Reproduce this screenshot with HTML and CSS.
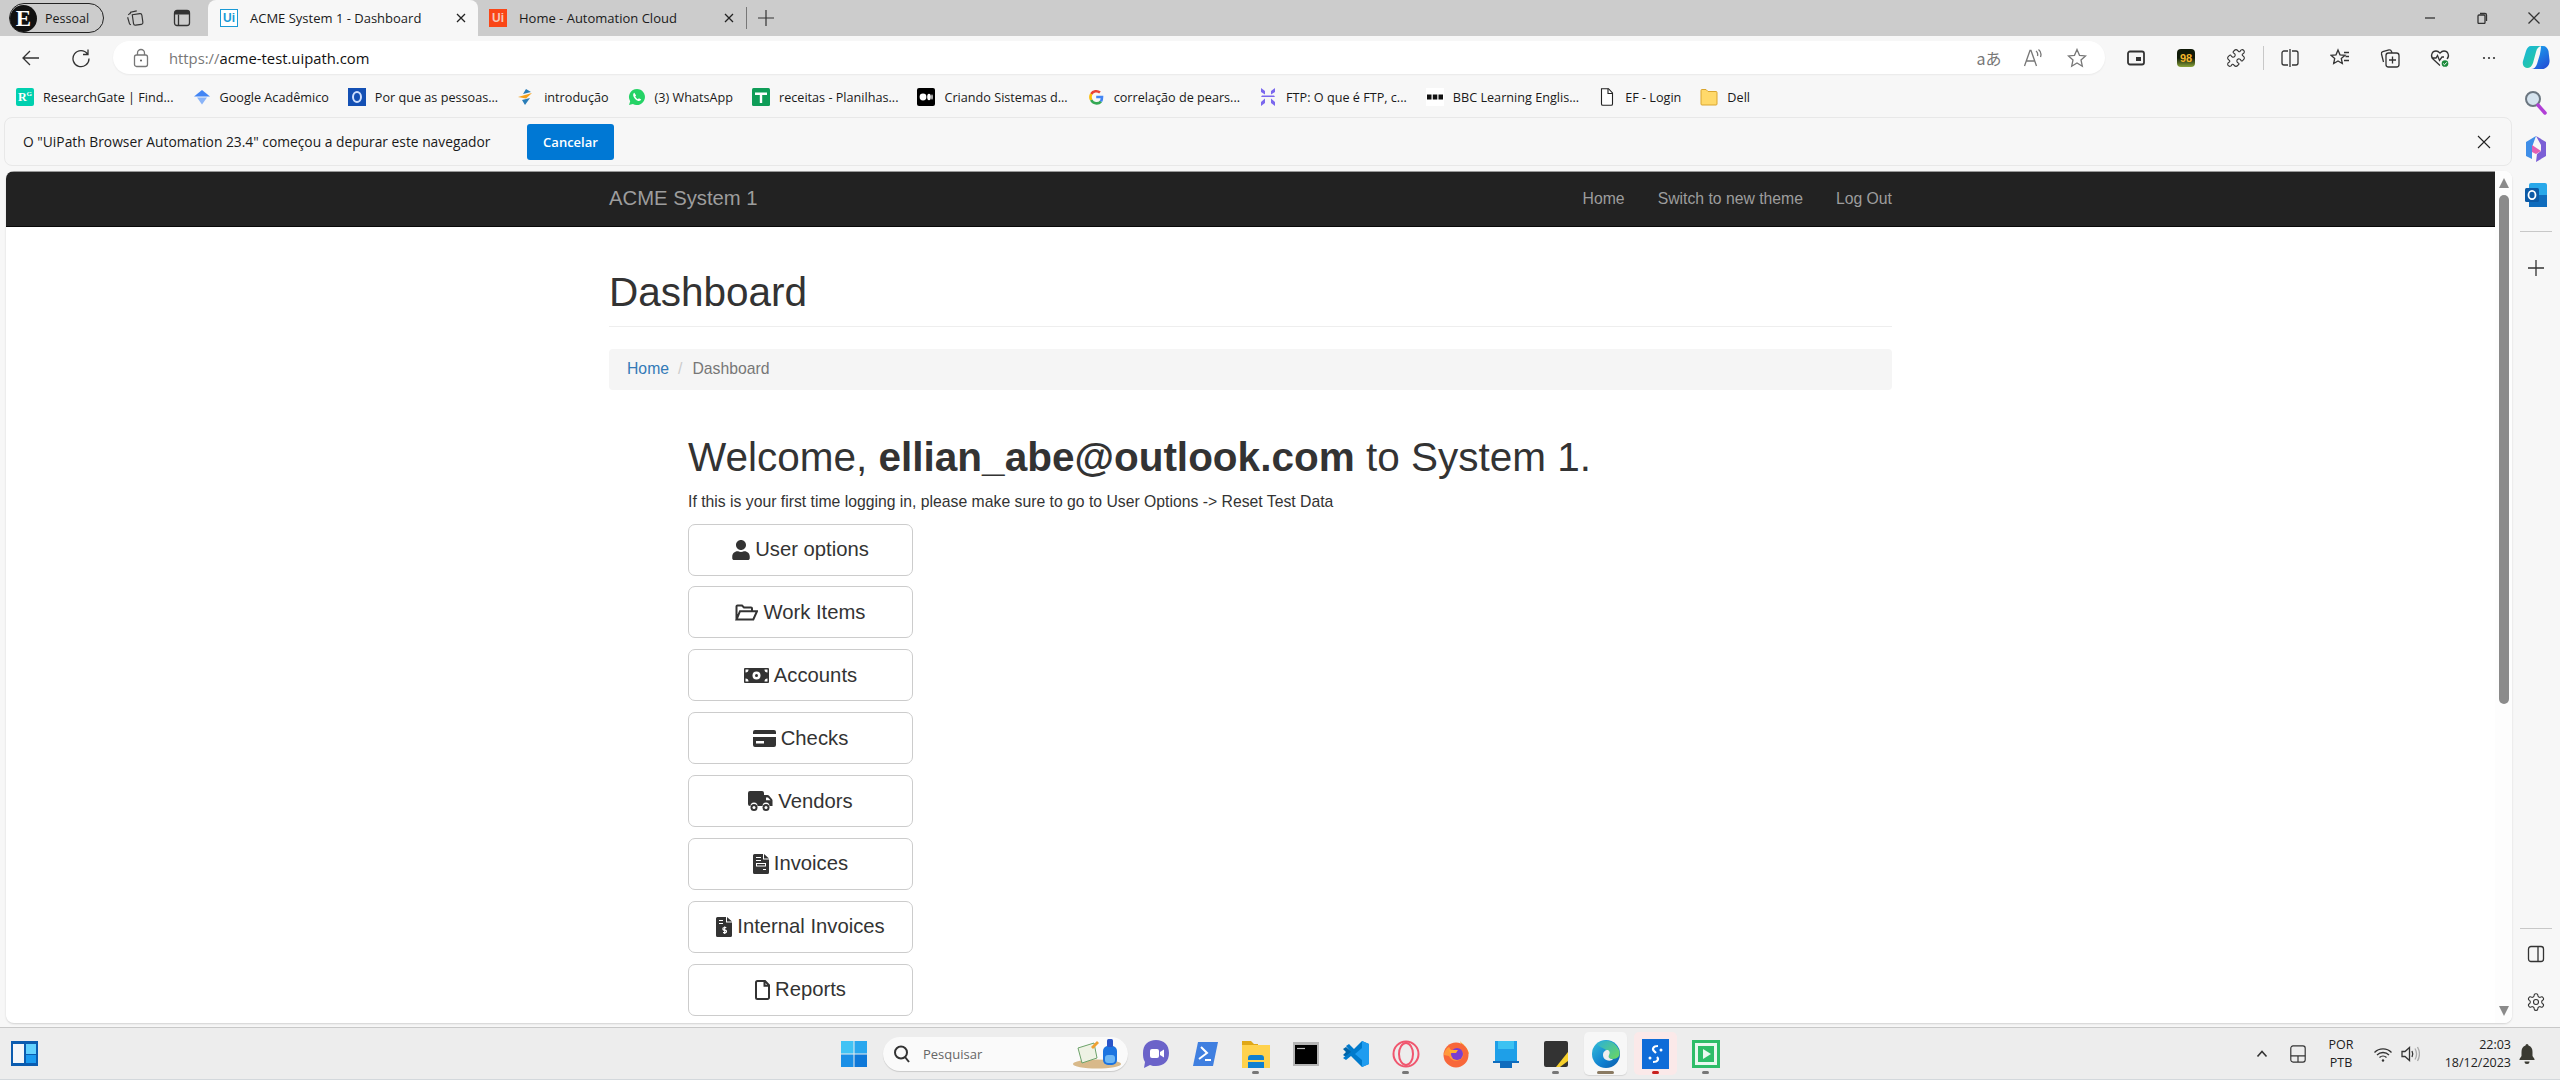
FILE: index.html
```html
<!DOCTYPE html>
<html lang="pt-BR">
<head>
    <meta charset="UTF-8">
    <title>ACME System 1 - Dashboard</title>
    <link rel="stylesheet" href="styles.css">
</head>
<body>
<div class="tabstrip">
    <div class="profile"><span class="avatar">E</span><span class="profile-name">Pessoal</span></div>
    <div class="strip-icon first"><svg class="ic18" viewBox="0 0 20 20"><path d="M3 5.5 7 3M2 8l1 7c.2 1 .8 1.5 1.500 1.800M5 5l1-2 7-.5M7.500 6h8.500a2 2 0 0 1 2 2v8a2 2 0 0 1-2 2H9.500a2 2 0 0 1-2-2z" transform="rotate(-8 10 10)"/></svg></div>
    <div class="strip-icon"><svg class="ic18" viewBox="0 0 18 18"><rect x="1.500" y="1.500" width="15" height="15" rx="2.500"/><path class="solid" d="M1.500 4a2.500 2.500 0 0 1 2.500-2.500h10A2.500 2.500 0 0 1 16.500 4v1.500h-15z"/><path d="M5.500 5.500v11"/></svg></div>
    <div class="tab active">
        <span class="uifav blue">Ui</span>
        <span class="tab-title">ACME System 1 - Dashboard</span>
        <svg class="tab-x" viewBox="0 0 12 12"><path d="M2 2l8 8M10 2l-8 8"/></svg>
    </div>
    <div class="tab other">
        <span class="uifav orange">Ui</span>
        <span class="tab-title">Home - Automation Cloud</span>
        <svg class="tab-x" viewBox="0 0 12 12"><path d="M2 2l8 8M10 2l-8 8"/></svg>
    </div>
    <div class="tab-divider"></div>
    <svg class="tab-plus" viewBox="0 0 18 18"><path d="M9 1v16M1 9h16"/></svg>
    <div class="win-controls">
        <div class="win-btn"><svg class="ic12" viewBox="0 0 12 12"><path d="M1 6h10"/></svg></div>
        <div class="win-btn"><svg class="ic12" viewBox="0 0 12 12"><rect x="2" y="3" width="7" height="8.500" rx="1"/><path d="M4 1.500h5a1.500 1.500 0 0 1 1.500 1.500v6"/></svg></div>
        <div class="win-btn"><svg class="ic12" viewBox="0 0 12 12"><path d="M.5.500l11 11M11.500.500l-11 11"/></svg></div>
    </div>
</div>

<div class="workarea">
    <div class="browser-col">
        <div class="toolbar">
            <div class="tool"><svg class="ic20" viewBox="0 0 20 20"><path d="M18 10H2M9 3l-7 7 7 7"/></svg></div>
            <div class="tool"><svg class="ic20" viewBox="0 0 20 20"><path d="M16.500 6A8 8 0 1 0 18 10.500M17 1.500V6.500h-5"/></svg></div>
            <div class="urlbar">
                <svg class="lock" viewBox="0 0 16 20"><rect x="1.500" y="7" width="13" height="11.500" rx="2"/><path d="M4.500 7V5a3.500 3.500 0 0 1 7 0v2"/><circle class="dot" cx="8" cy="12.500" r="1"/></svg>
                <span class="url"><span class="url-scheme">https://</span>acme-test.uipath.com</span>
                <div class="url-actions">
                    <span class="translate">aあ</span>
                    <div class="url-act"><svg class="ic20 grey" viewBox="0 0 20 20"><path d="M1.500 18 7 2.500h1L13.500 18M3.500 13h8M13 3c1.500 1 2 3 1.500 5M15.500 1.500c2 1.500 3 4.500 2 7.500"/></svg></div>
                    <div class="url-act"><svg class="ic20 grey" viewBox="0 0 20 20"><path d="M10 1.500l2.500 5.800 6 .6-4.500 4.100 1.300 6.200L10 15l-5.300 3.200L6 12 1.500 7.900l6-.6z"/></svg></div>
                </div>
            </div>
            <div class="tool-group">
                <div class="tool"><svg class="ic18" viewBox="0 0 18 18"><rect x="1" y="2.500" width="16" height="13" rx="2" stroke-width="1.800"/><rect class="solid" x="9" y="8" width="5" height="4"/></svg></div>
                <div class="tool"><span class="ext98">98</span></div>
                <div class="tool"><svg class="ic20" viewBox="0 0 24 24"><path d="M19.439 7.850c-.049.322.059.648.289.878l1.568 1.568c.47.47.706 1.087.706 1.704s-.235 1.233-.706 1.704l-1.611 1.611a.98.98 0 0 1-.837.276c-.47-.07-.802-.48-.968-.925a2.501 2.501 0 1 0-3.214 3.214c.446.166.855.497.925.968a.979.979 0 0 1-.276.837l-1.61 1.61a2.404 2.404 0 0 1-1.705.707 2.402 2.402 0 0 1-1.704-.706l-1.568-1.568a1.026 1.026 0 0 0-.877-.29c-.493.074-.84.504-1.02.968a2.500 2.500 0 1 1-3.237-3.237c.464-.18.894-.527.967-1.02a1.026 1.026 0 0 0-.289-.877l-1.568-1.568A2.402 2.402 0 0 1 1.998 12c0-.617.236-1.234.706-1.704L4.230 8.770c.24-.24.581-.353.917-.303.515.077.877.528 1.073 1.010a2.500 2.500 0 1 0 3.259-3.259c-.482-.196-.933-.558-1.010-1.073-.05-.336.062-.676.303-.917l1.525-1.525A2.402 2.402 0 0 1 12 1.998c.617 0 1.234.236 1.704.706l1.568 1.568c.23.23.556.338.877.29.493-.074.84-.504 1.020-.968a2.500 2.500 0 1 1 3.237 3.237c-.464.18-.894.527-.967 1.020Z"/></svg></div>
                <div class="tool-sep"></div>
                <div class="tool"><svg class="ic20" viewBox="0 0 20 20"><path d="M8 3H4a2 2 0 0 0-2 2v10a2 2 0 0 0 2 2h4M12 3h4a2 2 0 0 1 2 2v10a2 2 0 0 1-2 2h-4M10 1v18"/></svg></div>
                <div class="tool"><svg class="ic20" viewBox="0 0 20 20"><path d="M8 2l2 4.800 5 .5-3.700 3.200 1 5L8 13l-4.300 2.500 1-5L1 7.300l5-.5zM14 4.500h5M15.500 8.500H19M14 12.500h5"/></svg></div>
                <div class="tool"><svg class="ic20" viewBox="0 0 20 20"><rect x="6" y="5" width="13" height="14" rx="2.500"/><path d="M12.500 8.500v7M9 12h7M3.500 14 1.500 6c-.2-1 .3-2 1.300-2.300L9 2c1-.3 2 .2 2.500 1.500L12 5"/></svg></div>
                <div class="tool"><svg class="ic20" viewBox="0 0 20 20"><path d="M10 17.500 3 11c-3-3-1-8 3-8 2 0 3 1 4 2.200C11 4 12 3 14 3c4 0 6 5 3 8M1.500 10H6l1.500-2.500 2 5L12 9h2"/><circle class="ok" cx="15" cy="15.500" r="4"/><path class="ok-check" d="M13.200 15.500l1.300 1.300 2.300-2.500"/></svg></div>
                <div class="tool last"><svg class="ic16" viewBox="0 0 16 16"><circle class="solid" cx="3" cy="8" r="1.100"/><circle class="solid" cx="8" cy="8" r="1.100"/><circle class="solid" cx="13" cy="8" r="1.100"/></svg></div>
            </div>
        </div>

        <div class="bookmarks">
            <div class="bm"><span class="bm-ico rg">R<sup>G</sup></span><span class="bm-t">ResearchGate | Find...</span></div>
            <div class="bm"><svg class="bm-svg" viewBox="0 0 18 18"><path fill="#4285f4" d="M9 2 1 8.500h16z"/><path fill="#8ab4f8" d="M4 9.500h10L9 16.500z"/></svg><span class="bm-t">Google Acadêmico</span></div>
            <div class="bm"><span class="bm-ico oring"><span class="oring-in"></span></span><span class="bm-t">Por que as pessoas...</span></div>
            <div class="bm"><svg class="bm-svg" viewBox="0 0 18 18"><path fill="#f5a11c" d="M1 9 15 5 9 10.500z"/><path fill="#2a7db8" d="M9 1l5 3-8 2zM5 12l8-2-5 7z"/></svg><span class="bm-t">introdução</span></div>
            <div class="bm"><svg class="bm-svg" viewBox="0 0 18 18"><path fill="#25d366" d="M9 1a8 8 0 0 0-6.800 12.200L1 17l3.900-1.100A8 8 0 1 0 9 1z"/><path fill="#fff" d="M6.300 4.800c-1 .6-1.500 2-.8 3.600 1 2.300 2.500 3.800 4.700 4.500 1.400.4 2.600-.3 3-1.300l-2.300-1.300-1 1c-1.300-.6-2.100-1.500-2.700-2.700l.9-1z"/></svg><span class="bm-t">(3) WhatsApp</span></div>
            <div class="bm"><svg class="bm-svg" viewBox="0 0 18 18"><rect width="18" height="18" rx="1.500" fill="#0f9d58"/><path fill="#fff" d="M3 4.500h12V7h-4.800v8H7.800V7H3z"/></svg><span class="bm-t">receitas - Planilhas...</span></div>
            <div class="bm"><svg class="bm-svg" viewBox="0 0 18 18"><rect width="18" height="18" rx="2" fill="#000"/><circle cx="6" cy="9" r="3.400" fill="#fff"/><ellipse cx="12" cy="9" rx="1.800" ry="3.200" fill="#fff"/><ellipse cx="15" cy="9" rx=".7" ry="2.800" fill="#fff"/></svg><span class="bm-t">Criando Sistemas d...</span></div>
            <div class="bm"><svg class="bm-svg" viewBox="0 0 18 18"><path fill="none" stroke-width="2.600" stroke="#ea4335" d="M4.200 6A6 6 0 0 1 13 4.500"/><path fill="none" stroke-width="2.600" stroke="#fbbc05" d="M4.200 6a6.500 6.500 0 0 0 0 6"/><path fill="none" stroke-width="2.600" stroke="#34a853" d="M4.200 12a6 6 0 0 0 9.800 1.500"/><path fill="none" stroke-width="2.600" stroke="#4285f4" d="M9.200 9H15c0 2-.4 3.300-1 4.500"/></svg><span class="bm-t">correlação de pears...</span></div>
            <div class="bm"><svg class="bm-svg" viewBox="0 0 18 18"><path fill="#7b68ee" d="M2 0l4 3v3.500L2 4zM16 0l-4 3v3.500L16 4zM3 7.500h12L16 9H2zM2 14l4-3.500V15l-4 3zM16 14l-4-3.500V15l4 3z"/></svg><span class="bm-t">FTP: O que é FTP, c...</span></div>
            <div class="bm"><svg class="bm-svg" viewBox="0 0 18 18"><rect width="18" height="18" fill="#fff"/><path fill="#111" d="M1 6.500h4.500v5H1zM6.800 6.500h4.500v5H6.800zM12.500 6.500H17v5h-4.500z"/></svg><span class="bm-t">BBC Learning Englis...</span></div>
            <div class="bm"><svg class="bm-svg" viewBox="0 0 18 18"><path fill="#fff" stroke="#222" stroke-width="1.100" d="M3.500.700h7L14.500 5v11a1.300 1.300 0 0 1-1.300 1.300H4.800A1.300 1.300 0 0 1 3.500 16z"/><path fill="none" stroke="#222" stroke-width="1.100" d="M10 .7V5.500h4.500"/></svg><span class="bm-t">EF - Login</span></div>
            <div class="bm"><svg class="bm-svg" viewBox="0 0 18 18"><path fill="#ffd96a" stroke="#d9a52e" d="M1 2.500a1 1 0 0 1 1-1h4l2 2h8a1 1 0 0 1 1 1V16a1 1 0 0 1-1 1H2a1 1 0 0 1-1-1z"/></svg><span class="bm-t">Dell</span></div>
        </div>

        <div class="debugbar">
            <span class="debug-text">O "UiPath Browser Automation 23.4" começou a depurar este navegador</span>
            <button class="debug-btn">Cancelar</button>
            <svg class="debug-x" viewBox="0 0 14 14"><path d="M1 1l12 12M13 1 1 13"/></svg>
        </div>

        <div class="page">
            <div class="page-body">
                <nav class="navbar">
                    <div class="nav-inner">
                        <a class="brand">ACME System 1</a>
                        <div class="nav-links"><a>Home</a><a>Switch to new theme</a><a>Log Out</a></div>
                    </div>
                </nav>
                <div class="container">
                    <h1 class="page-title">Dashboard</h1>
                    <div class="breadcrumb"><a>Home</a><span class="crumb-sep">/</span><span class="crumb-now">Dashboard</span></div>
                    <div class="dash">
                        <h1 class="welcome">Welcome, <strong>ellian_abe@outlook.com</strong> to System 1.</h1>
                        <p class="hint">If this is your first time logging in, please make sure to go to User Options -&gt; Reset Test Data</p>
                        <div class="menu">
                            <a class="menu-btn"><svg class="bi" width="18" height="20" viewBox="0 0 448 512"><path d="M224 256c70.700 0 128-57.300 128-128S294.700 0 224 0 96 57.300 96 128s57.300 128 128 128zm89.600 32h-16.700c-22.200 10.200-46.900 16-72.900 16s-50.600-5.800-72.900-16h-16.700C60.200 288 0 348.200 0 422.400V464c0 26.500 21.500 48 48 48h352c26.500 0 48-21.500 48-48v-41.600c0-74.200-60.200-134.400-134.400-134.400z"/></svg>User options</a>
                            <a class="menu-btn"><svg class="bi" width="23" height="17" viewBox="0 0 23 17"><path class="bi-line" d="M1.500 15.500V2.500a1 1 0 0 1 1-1h4.500l2 2h7a1 1 0 0 1 1 1V7M1.500 15.500l3.500-8.300h17l-3.700 8.300z"/></svg>Work Items</a>
                            <a class="menu-btn"><svg class="bi" width="25" height="15" viewBox="0 0 25 15"><rect width="25" height="15" rx="1"/><circle class="bi-w" cx="12.500" cy="7.500" r="4"/><circle cx="12.500" cy="7.500" r="1.500"/><path class="bi-w" d="M1.500 1.500h3a3 3 0 0 1-3 3zM23.500 1.500h-3a3 3 0 0 0 3 3zM1.500 13.500h3a3 3 0 0 0-3-3zM23.500 13.500h-3a3 3 0 0 1 3-3z"/></svg>Accounts</a>
                            <a class="menu-btn"><svg class="bi" width="23" height="17" viewBox="0 0 23 17"><path d="M0 2a2 2 0 0 1 2-2h19a2 2 0 0 1 2 2v2H0zM0 7h23v8a2 2 0 0 1-2 2H2a2 2 0 0 1-2-2z"/><rect class="bi-w" x="3" y="11" width="8" height="2.500"/></svg>Checks</a>
                            <a class="menu-btn"><svg class="bi" width="25" height="20" viewBox="0 0 25 20"><path d="M2 0h12a2 2 0 0 1 2 2v2h3.500c.5 0 1 .2 1.400.6l3 3.300c.4.400.6.900.6 1.400V15h-3a3.500 3.500 0 0 0-7 0H9.500a3.500 3.500 0 0 0-7 0H2a2 2 0 0 1-2-2V2a2 2 0 0 1 2-2z"/><path class="bi-w" d="M18 6.500h2l2.500 2.800H18z"/><circle cx="6" cy="16.500" r="3.500"/><circle class="bi-w" cx="6" cy="16.500" r="1.500"/><circle cx="18" cy="16.500" r="3.500"/><circle class="bi-w" cx="18" cy="16.500" r="1.500"/></svg>Vendors</a>
                            <a class="menu-btn"><svg class="bi" width="16" height="20" viewBox="0 0 16 20"><path d="M1.500 0H10v5.500h6V18.500A1.500 1.500 0 0 1 14.500 20h-13A1.500 1.500 0 0 1 0 18.500v-17A1.500 1.500 0 0 1 1.500 0zM11 0l5 4.500h-5z"/><path class="bi-w" d="M3 3h5v1H3zM3 6h5v1H3zM3 9h10v3.500H3zM10 15h3v1h-3z"/><rect x="4" y="10" width="8" height="1.500"/></svg>Invoices</a>
                            <a class="menu-btn"><svg class="bi" width="16" height="20" viewBox="0 0 16 20"><path d="M1.500 0H10v5.500h6V18.500A1.500 1.500 0 0 1 14.500 20h-13A1.500 1.500 0 0 1 0 18.500v-17A1.500 1.500 0 0 1 1.500 0zM11 0l5 4.500h-5z"/><path class="bi-w" d="M3 3h4v1H3zM3 6h4v1H3z"/><path class="bi-s" d="M10.300 10.500H8.200a1.100 1.100 0 0 0 0 2.600h1a1.100 1.100 0 0 1 0 2.600H7M8.700 9.500v7.500"/></svg>Internal Invoices</a>
                            <a class="menu-btn"><svg class="bi" width="15" height="20" viewBox="0 0 15 20"><path class="bi-line" d="M2.500 1h7.500l4 4.200v12.300a1.500 1.500 0 0 1-1.500 1.500h-10A1.500 1.500 0 0 1 1 17.500V2.500A1.500 1.500 0 0 1 2.500 1zM9.500 1v4.700H14"/></svg>Reports</a>
                        </div>
                    </div>
                </div>
            </div>
            <div class="scrollbar">
                <div class="sb-btn"><span class="sb-up"></span></div>
                <div class="sb-thumb"></div>
                <div class="sb-btn end"><span class="sb-down"></span></div>
            </div>
        </div>
    </div>

    <aside class="sidebar">
        <div class="side-btn top"><svg width="28" height="26" viewBox="0 0 28 26"><defs><linearGradient id="cpa" x1="0" y1="0" x2="1" y2="1"><stop offset="0" stop-color="#18b4e0"/><stop offset="1" stop-color="#2ad08a"/></linearGradient><linearGradient id="cpb" x1="0" y1="0" x2=".6" y2="1"><stop offset="0" stop-color="#18a8f0"/><stop offset="1" stop-color="#2356d8"/></linearGradient></defs><path fill="url(#cpa)" d="M9 1h12c-4 0-6 2-7 6l-3 11c-1 3-3 5-6 5-3-.5-5-3-4-7l3-10C5 3 6.500 1 9 1z"/><path fill="url(#cpb)" d="M19 1h2c3 0 4.500 2 5.500 5l1 9c.5 4-2 8-6 9H9c3 0 5-2 6-5l3-10c.5-3 1-6 1-8z"/></svg></div>
        <div class="side-btn"><svg width="24" height="26" viewBox="0 0 24 26"><circle cx="9" cy="9" r="7" fill="#d5e3ee" stroke="#6b7680" stroke-width="2"/><path d="M14 15l7 8" stroke="#b13fd6" stroke-width="3.500" stroke-linecap="round"/></svg></div>
        <div class="side-btn"><svg width="22" height="26" viewBox="0 0 22 26"><path fill="#7b5fd6" d="M11 0 21 6v14l-10 6 1-8 4-3V9z"/><path fill="#3f8ee8" d="M11 0 1 6v14l6 3V11z"/><path fill="#e25fb4" d="M7 9l9 6-5 3-4-2z"/></svg></div>
        <div class="side-btn"><svg width="24" height="26" viewBox="0 0 24 26"><rect x="5" y="1" width="18" height="24" rx="2" fill="#28a8ea"/><rect x="5" y="13" width="18" height="12" fill="#0f6cbd"/><rect x="1" y="6" width="14" height="14" rx="1.500" fill="#0c5aa6"/><ellipse cx="8" cy="13" rx="3.500" ry="4.200" fill="none" stroke="#fff" stroke-width="1.800"/></svg></div>
        <div class="side-line"></div>
        <div class="side-btn plus"><svg class="ic16" viewBox="0 0 16 16"><path d="M8 0v16M0 8h16"/></svg></div>
        <div class="side-spacer"></div>
        <div class="side-line"></div>
        <div class="side-btn low"><svg class="ic18" viewBox="0 0 18 18"><rect x="1.500" y="1.500" width="15" height="15" rx="2.500"/><path d="M11 1.500v15"/></svg></div>
        <div class="side-btn low gear"><svg class="ic20" viewBox="0 0 24 24"><path d="M12.220 2h-.44a2 2 0 0 0-2 2v.18a2 2 0 0 1-1 1.730l-.43.25a2 2 0 0 1-2 0l-.15-.08a2 2 0 0 0-2.730.73l-.22.38a2 2 0 0 0 .73 2.730l.15.1a2 2 0 0 1 1 1.720v.51a2 2 0 0 1-1 1.740l-.15.09a2 2 0 0 0-.73 2.730l.22.38a2 2 0 0 0 2.730.73l.15-.08a2 2 0 0 1 2 0l.43.25a2 2 0 0 1 1 1.730V20a2 2 0 0 0 2 2h.44a2 2 0 0 0 2-2v-.18a2 2 0 0 1 1-1.730l.43-.25a2 2 0 0 1 2 0l.15.08a2 2 0 0 0 2.730-.73l.22-.39a2 2 0 0 0-.73-2.730l-.15-.08a2 2 0 0 1-1-1.740v-.5a2 2 0 0 1 1-1.740l.15-.09a2 2 0 0 0 .73-2.730l-.22-.38a2 2 0 0 0-2.730-.73l-.15.08a2 2 0 0 1-2 0l-.43-.25a2 2 0 0 1-1-1.730V4a2 2 0 0 0-2-2z"/><circle cx="12" cy="12" r="3"/></svg></div>
    </aside>
</div>

<div class="taskbar">
    <div class="task-left">
        <svg width="27" height="25" viewBox="0 0 27 25"><rect width="27" height="25" fill="#0a5cb0"/><rect x="2" y="3" width="11" height="19" fill="#f2f6fa"/><rect x="15" y="3" width="10" height="10" fill="#62d2ff"/><rect x="15" y="14" width="10" height="8" fill="#1a9bf0"/></svg>
    </div>
    <div class="task-center">
        <svg width="26" height="26" viewBox="0 0 26 26"><rect width="12.500" height="12.500" fill="#41c3f5"/><rect x="13.500" width="12.500" height="12.500" fill="#2aa7ee"/><rect y="13.500" width="12.500" height="12.500" fill="#1a8fe6"/><rect x="13.500" y="13.500" width="12.500" height="12.500" fill="#0e78d8"/></svg>
        <div class="search">
            <svg class="ic18" viewBox="0 0 18 18"><circle cx="8" cy="7.500" r="6" stroke-width="2"/><path d="M12 12l4 5" stroke-width="2"/></svg>
            <span class="search-text">Pesquisar</span>
            <svg class="search-art" width="50" height="30" viewBox="0 0 50 30"><ellipse cx="25" cy="25" rx="24" ry="4.500" fill="#d8b98a"/><path fill="#eef2e4" stroke="#6da36a" d="M6 9l16-5 3 15-15 5z"/><path d="M19 8l6-6 2 2-6 6z" fill="#f0a030"/><rect x="31" y="7" width="14" height="19" rx="5" fill="#1c74e0"/><rect x="35" y="0" width="6" height="8" rx="1.500" fill="#2a54c8"/><rect x="33" y="16" width="10" height="8" rx="3" fill="#6fb8f5"/></svg>
        </div>
        <div class="apps">
            <div class="app"><svg width="28" height="30" viewBox="0 0 28 30"><path fill="#6b63c9" d="M14 1c8 0 13 5 13 13s-5 13-13 13c-2 0-4 0-6-1l-6 3 1-6C1 20 1 17 1 14 1 6 6 1 14 1z"/><rect x="8" y="10" width="9" height="9" rx="2" fill="#fff"/><path fill="#fff" d="M18 13l4-2.500v8L18 16z"/></svg></div>
            <div class="app"><svg width="26" height="26" viewBox="0 0 26 26"><path fill="#3f7fe0" d="M5 1h20l-5 24H0z"/><path fill="none" stroke="#fff" stroke-width="2" d="M8 6l6 6-8 6M12 19h6"/></svg></div>
            <div class="app dot"><svg width="28" height="28" viewBox="0 0 28 28"><path fill="#e0a818" d="M0 1h9l3 3h4v5H0z"/><rect y="5" width="28" height="23" fill="#ffd24d"/><path fill="#0f7fd0" d="M6 18a3 3 0 0 1 3-3h10a3 3 0 0 1 3 3v10H6z"/><rect x="6" y="20" width="16" height="2" fill="#ffd24d"/></svg></div>
            <div class="app"><svg width="26" height="24" viewBox="0 0 26 24"><rect width="26" height="24" fill="#b5b5b5"/><rect x="2" y="3" width="22" height="19" fill="#000"/><path stroke="#bbb" stroke-width="1.200" d="M4 6.500h8"/></svg></div>
            <div class="app"><svg width="28" height="28" viewBox="0 0 28 28"><path fill="#0065a9" d="M1 9l3-2 6 5-6 5-3-2 3-3z"/><path fill="#007acc" d="M20 1l7 3v20l-7 3-11-11-5 4-3-2 8-6L4 6l3-2 5 5z"/><path fill="#1f9cf0" d="M20 1l7 3v20l-7 3zM20 8l-7 6 7 6z" fill-rule="evenodd"/></svg></div>
            <div class="app dot"><svg width="28" height="28" viewBox="0 0 28 28"><circle cx="14" cy="14" r="12.500" fill="none" stroke="#f0566e" stroke-width="2"/><ellipse cx="14" cy="14" rx="7" ry="11" fill="none" stroke="#f0566e" stroke-width="2"/></svg></div>
            <div class="app"><svg width="28" height="28" viewBox="0 0 28 28"><path fill="#ffb02e" d="M18 1c2 3 8 6 9 13l-6-3z"/><circle cx="14" cy="15" r="12.500" fill="#f8673a"/><path fill="#ff9a3d" d="M2 15c0-4 3-7 5-8l2 3h10c3 2 3 7 0 9-4 3-10 2-12-3z"/><circle cx="15" cy="14" r="6" fill="#7a3fd0"/><path fill="#ffb02e" d="M7 10h9l-2 3H8z"/></svg></div>
            <div class="app"><svg width="26" height="28" viewBox="0 0 26 28"><rect x="2" y="1" width="22" height="22" fill="#1e9fe8"/><rect x="5" y="1" width="16" height="8" fill="#3cc2f2"/><rect x="0" y="21" width="26" height="2" fill="#0f6cbd"/><rect x="7" y="23" width="12" height="5" fill="#0f6cbd"/></svg></div>
            <div class="app dot"><svg width="24" height="26" viewBox="0 0 24 26"><rect width="24" height="26" rx="2" fill="#333"/><path fill="#f7d02c" d="M24 11v9l-8 6h-4z"/></svg></div>
            <div class="app active dot"><svg width="28" height="30" viewBox="0 0 28 30"><defs><linearGradient id="edg" x1="0" y1="0" x2="1" y2="1"><stop offset="0" stop-color="#36c0d8"/><stop offset=".6" stop-color="#0f7fd0"/><stop offset="1" stop-color="#0c5aa6"/></linearGradient><linearGradient id="edg2" x1="0" y1="0" x2="1" y2="1"><stop offset="0" stop-color="#2ab0d8"/><stop offset="1" stop-color="#6ed85c"/></linearGradient></defs><circle cx="14" cy="15" r="14" fill="url(#edg)"/><path fill="url(#edg2)" d="M5 5c7-6 18-4 22 6 2 5-1 9-6 9-3 0-5-1-5-3s1-3-2-6c-2-2-7-3-9-6z"/><path fill="#eee" d="M11 16c0-3 2-5 5-5 2 1 2 3 1 5s0 4 4 4c-2 3-10 2-10-4z"/></svg></div>
            <div class="app pinned dot"><svg width="27" height="30" viewBox="0 0 27 30"><rect width="27" height="30" fill="#0f6cd8"/><path fill="none" stroke="#fff" stroke-width="2.200" d="M16 7c-5 0-6 3-4 5l2 2M11 23c5 0 6-3 4-5"/><circle cx="8" cy="19" r="1.500" fill="#fff"/><circle cx="19" cy="11" r="1.500" fill="#fff"/></svg></div>
            <div class="app dot"><svg width="28" height="28" viewBox="0 0 28 28"><rect width="28" height="28" fill="#2ebd68"/><rect x="3" y="3" width="22" height="22" fill="#eaf8ef"/><rect x="6" y="6" width="16" height="16" fill="#2ebd68"/><path fill="#eaf8ef" d="M11 9l8 5-8 5z"/></svg></div>
        </div>
    </div>
    <div class="tray">
        <div class="tray-chev"><svg class="ic12" viewBox="0 0 12 12"><path d="M1.500 8.500 6 3.500l4.500 5" stroke-width="1.600"/></svg></div>
        <div class="tray-touch"><svg class="ic18" viewBox="0 0 18 20"><rect x="1" y="1" width="16" height="18" rx="2.500"/><path d="M1 12h16M9 12v7"/></svg></div>
        <div class="tray-lang"><span>POR</span><span>PTB</span></div>
        <div class="tray-wifi"><svg class="ic20" viewBox="0 0 20 20"><path d="M1.500 8.500a12 12 0 0 1 17 0M4 11a8.500 8.500 0 0 1 12 0M6.500 13.500a5 5 0 0 1 7 0"/><circle class="solid" cx="10" cy="16.500" r="1.200"/></svg></div>
        <div class="tray-vol"><svg class="ic20" viewBox="0 0 20 20"><path d="M2 7.500h3l4.500-4v13l-4.500-4H2zM12 7c1 2 1 4 0 6"/><path class="faint" d="M15 4.500c2 3.500 2 7.500 0 11M17.500 3c2.500 4.500 2.500 9.500 0 14"/></svg></div>
        <div class="tray-clock"><span>22:03</span><span>18/12/2023</span></div>
        <div class="tray-bell"><svg width="16" height="20" viewBox="0 0 16 20"><path fill="#3a3a32" d="M8 0a1.500 1.500 0 0 1 1.500 1.500C12.500 2.500 13.500 5 13.500 8v4l2 3v1H.5v-1l2-3V8c0-3 1-5.500 4-6.500A1.500 1.500 0 0 1 8 0zM5.500 17.500h5a2.500 2.500 0 0 1-5 0z"/></svg></div>
    </div>
</div>
</body>
</html>
```

FILE: styles.css
```css
* {
    box-sizing: border-box;
}
html, body {
    margin: 0;
    padding: 0;
    width: 2560px;
    height: 1080px;
    overflow: hidden;
}
body {
    display: flex;
    flex-direction: column;
    background: #f7f7f7;
    font-family: "Open Sans", "Liberation Sans", sans-serif;
    color: #1a1a1a;
}
svg {
    display: block;
    flex: none;
}
.ic12, .ic16, .ic18, .ic20, .lock {
    fill: none;
    stroke: #333;
    stroke-width: 1.3;
}
.ic12 { width: 12px; height: 12px; }
.ic16 { width: 16px; height: 16px; }
.ic18 { width: 18px; height: 18px; }
.ic20 { width: 20px; height: 20px; }
.solid { fill: #333; stroke: none; }
.grey { stroke: #777; }

/* tab strip */
.tabstrip {
    height: 36px;
    display: flex;
    align-items: flex-end;
    background: #cccccc;
    flex: none;
}
.profile {
    width: 95px;
    height: 30px;
    margin: 0 0 3px 9px;
    border: 1.500px solid #222;
    border-radius: 15px;
    display: flex;
    align-items: center;
}
.avatar {
    width: 27px;
    height: 27px;
    background: #111;
    border-radius: 50%;
    color: #fff;
    font: bold 23px/27px "Liberation Serif", serif;
    text-align: center;
}
.profile-name {
    margin-left: 8px;
    font-size: 12.500px;
}
.strip-icon {
    width: 47px;
    height: 36px;
    display: flex;
    align-items: center;
    justify-content: center;
}
.strip-icon.first {
    margin-left: 7px;
}
.tab {
    height: 36px;
    display: flex;
    align-items: center;
    font-size: 13px;
}
.tab.active {
    width: 270px;
    margin-left: 3px;
    padding: 0 9px 0 12px;
    background: #f7f7f7;
    border-radius: 8px 8px 0 0;
}
.tab.other {
    width: 260px;
    padding: 0 1px 0 11px;
}
.uifav {
    width: 18px;
    height: 18px;
    font: bold 12px/16px "Liberation Sans", sans-serif;
    text-align: center;
    flex: none;
}
.uifav.blue {
    border: 1.500px solid #1a9ad6;
    color: #1a9ad6;
    background: #fff;
}
.uifav.orange {
    background: #fa4616;
    color: #f6c9b8;
    border: 1.500px solid #fa4616;
}
.tab-title {
    margin-left: 12px;
    flex: 1;
    white-space: nowrap;
}
.tab-x {
    width: 12px;
    height: 12px;
    margin: 0 2px;
    fill: none;
    stroke: #222;
    stroke-width: 1.300;
}
.tab-divider {
    width: 1px;
    height: 22px;
    margin: 0 0 7px 8px;
    background: #777;
}
.tab-plus {
    width: 18px;
    height: 18px;
    margin: 0 0 9px 10px;
    fill: none;
    stroke: #333;
    stroke-width: 1.200;
}
.win-controls {
    margin-left: auto;
    display: flex;
}
.win-btn {
    width: 52px;
    height: 36px;
    display: flex;
    align-items: center;
    justify-content: center;
}

/* main area */
.workarea {
    flex: 1;
    min-height: 0;
    display: flex;
}
.browser-col {
    width: 2512px;
    display: flex;
    flex-direction: column;
}
.toolbar {
    height: 38px;
    display: flex;
    align-items: center;
    padding: 0 0 0 6px;
    flex: none;
}
.tool {
    width: 50px;
    height: 33px;
    margin-top: 5px;
    display: flex;
    align-items: center;
    justify-content: center;
    flex: none;
}
.tool.last {
    width: 47px;
}
.urlbar {
    width: 1992px;
    height: 33px;
    margin: 5px 0 0 7px;
    padding-left: 20px;
    background: #fff;
    border-radius: 17px;
    box-shadow: 0 1px 2px rgba(0, 0, 0, .06);
    display: flex;
    align-items: center;
    flex: none;
}
.lock {
    width: 16px;
    height: 20px;
    stroke: #777;
}
.lock .dot {
    fill: #555;
    stroke: none;
}
.url {
    margin-left: 20px;
    font-size: 14.800px;
    color: #111;
}
.url-scheme {
    color: #777;
}
.url-actions {
    margin-left: auto;
    padding-right: 6px;
    display: flex;
    align-items: center;
}
.translate {
    width: 44px;
    text-align: center;
    font: 16px "Noto Sans CJK JP", sans-serif;
    color: #777;
}
.url-act {
    width: 44px;
    display: flex;
    justify-content: center;
}
.tool-group {
    margin-left: 6px;
    display: flex;
    align-items: center;
    flex: none;
}
.tool-sep {
    width: 1px;
    height: 24px;
    margin: 5px 1px 0 2px;
    background: #c8c8c8;
    flex: none;
}
.ext98 {
    width: 18px;
    height: 18px;
    border-radius: 4px;
    background: linear-gradient(#101a08 50%, #8aa53a);
    color: #f2b52a;
    font: bold 11px/18px "Liberation Sans", sans-serif;
    text-align: center;
}
.ok {
    fill: #1a8a3a;
    stroke: #f7f7f7;
}
.ok-check {
    stroke: #fff;
    stroke-width: 1;
}

/* favorites */
.bookmarks {
    height: 43px;
    padding: 3px 0 0 16px;
    display: flex;
    align-items: center;
    gap: 19px;
    flex: none;
}
.bm {
    display: flex;
    align-items: center;
    gap: 9px;
    font-size: 12.650px;
    white-space: nowrap;
}
.bm-svg {
    width: 18px;
    height: 18px;
}
.bm-ico {
    width: 18px;
    height: 18px;
    flex: none;
}
.rg {
    background: #00d0af;
    color: #fff;
    font: bold 12px/18px "Liberation Serif", serif;
    text-align: center;
    border-radius: 2px;
}
.rg sup {
    font-size: 7px;
    line-height: 0;
}
.oring {
    background: #1450b4;
    display: flex;
    align-items: center;
    justify-content: center;
}
.oring-in {
    width: 10px;
    height: 12px;
    border: 2px solid #cfe0ff;
    border-radius: 50%;
}

/* debugger notice */
.debugbar {
    height: 49px;
    margin: 0 0 5px 4px;
    padding-left: 18px;
    border: 1px solid #e8e8e8;
    border-radius: 8px;
    display: flex;
    align-items: center;
    flex: none;
}
.debug-text {
    width: 486px;
    font-size: 13.800px;
    white-space: nowrap;
}
.debug-btn {
    width: 87px;
    height: 36px;
    margin-left: 18px;
    background: #0078d4;
    border: 0;
    border-radius: 3px;
    color: #fff;
    font: 600 13px "Open Sans", sans-serif;
}
.debug-x {
    width: 14px;
    height: 14px;
    margin-left: auto;
    margin-right: 20px;
    fill: none;
    stroke: #222;
    stroke-width: 1.100;
}

/* the web page */
.page {
    flex: 1;
    min-height: 0;
    margin: 0 0 4px 6px;
    display: flex;
    background: #fff;
    border-radius: 8px;
    box-shadow: 0 1px 2px rgba(0, 0, 0, .15);
    overflow: hidden;
    font-family: "Liberation Sans", Arial, sans-serif;
    color: #333;
}
.page-body {
    flex: 1;
    min-width: 0;
    border-top: 1px solid #999;
}
.navbar {
    height: 55px;
    background: #222;
    border-bottom: 1px solid #080808;
}
.nav-inner {
    width: 1283px;
    height: 100%;
    margin: 0 auto;
    padding-bottom: 1px;
    display: flex;
    align-items: center;
    color: #9d9d9d;
}
.brand {
    font-size: 20.250px;
}
.nav-links {
    margin-left: auto;
    display: flex;
    gap: 33px;
    font-size: 15.750px;
}
.container {
    width: 1283px;
    margin: 0 auto;
    padding-top: 43px;
}
.page-title {
    margin: 0 0 22px;
    padding-bottom: 11px;
    border-bottom: 1px solid #eee;
    font-size: 40.500px;
    line-height: 1.100;
    font-weight: 500;
}
.breadcrumb {
    height: 41px;
    padding: 0 18px;
    background: #f5f5f5;
    border-radius: 4px;
    display: flex;
    align-items: center;
    font-size: 15.750px;
    color: #777;
}
.breadcrumb a {
    color: #337ab7;
}
.crumb-sep {
    margin: 0 10px 0 9px;
    color: #ccc;
}
.dash {
    margin-left: 79px;
}
.welcome {
    margin: 45px 0 12px;
    font-size: 40.500px;
    line-height: 1.100;
    font-weight: 500;
}
.hint {
    margin: 0 0 10px;
    font-size: 15.750px;
    line-height: 22.500px;
}
.menu {
    display: flex;
    flex-direction: column;
    gap: 10.860px;
}
.menu-btn {
    width: 225px;
    height: 52px;
    border: 1px solid #ccc;
    border-radius: 7px;
    display: flex;
    align-items: center;
    justify-content: center;
    gap: 5px;
    font-size: 20.250px;
    flex: none;
}
.bi {
    fill: #333;
}
.bi-w {
    fill: #fff;
}
.bi-line {
    fill: none;
    stroke: #333;
    stroke-width: 2;
}
.bi-s {
    fill: none;
    stroke: #fff;
    stroke-width: 1.200;
}
.scrollbar {
    width: 17px;
    display: flex;
    flex-direction: column;
    align-items: center;
    background: #fdfdfd;
}
.sb-btn {
    height: 24px;
    width: 100%;
    display: flex;
    align-items: center;
    justify-content: center;
    flex: none;
}
.sb-btn.end {
    margin-top: auto;
}
.sb-up, .sb-down {
    width: 0;
    height: 0;
    border-left: 5px solid transparent;
    border-right: 5px solid transparent;
}
.sb-up {
    border-bottom: 10px solid #8a8a8a;
}
.sb-down {
    border-top: 10px solid #8a8a8a;
}
.sb-thumb {
    width: 10px;
    height: 509px;
    background: #8b8b8b;
    border-radius: 5px;
}

/* edge sidebar */
.sidebar {
    flex: 1;
    display: flex;
    flex-direction: column;
    align-items: center;
    padding-bottom: 4px;
}
.side-btn {
    width: 100%;
    height: 46px;
    display: flex;
    align-items: center;
    justify-content: center;
    flex: none;
}
.side-btn.top {
    height: 44px;
}
.side-line {
    width: 32px;
    height: 1px;
    margin-top: 13px;
    background: #c8c8c8;
    flex: none;
}
.side-btn.plus {
    margin-top: 13px;
}
.side-spacer {
    flex: 1;
}
.side-btn.low {
    margin-top: 2px;
}
.side-btn.gear {
    margin-bottom: -2px;
}

/* windows taskbar */
.taskbar {
    height: 53px;
    display: grid;
    grid-template-columns: 841px 1fr auto;
    align-items: center;
    background: #ededed;
    border-top: 1px solid #c8c8c8;
    border-bottom: 1px solid #d3d8dc;
    flex: none;
}
.task-left {
    padding-left: 11px;
}
.task-center {
    display: flex;
    align-items: center;
}
.search {
    width: 245px;
    height: 34px;
    margin-left: 16px;
    padding-left: 10px;
    background: #fafafa;
    border-radius: 17px;
    box-shadow: 0 1px 1px rgba(0, 0, 0, .15);
    display: flex;
    align-items: center;
}
.search-text {
    margin-left: 12px;
    font-size: 13px;
    color: #666;
}
.search-art {
    margin-left: auto;
    margin-right: 6px;
}
.apps {
    margin-left: 6px;
    display: flex;
    gap: 7px;
}
.app {
    position: relative;
    width: 43px;
    height: 43px;
    border-radius: 5px;
    display: flex;
    align-items: center;
    justify-content: center;
}
.app.dot::after {
    content: "";
    position: absolute;
    left: 18px;
    bottom: 1px;
    width: 7px;
    height: 3px;
    border-radius: 2px;
    background: #777;
}
.app.active {
    background: #f7f7f7;
    box-shadow: 0 1px 1px rgba(0, 0, 0, .1);
}
.app.active::after {
    left: 13px;
    width: 17px;
    background: #8a7a62;
}
.app.pinned {
    background: #fbe9e9;
}
.app.pinned::after {
    background: #c8201e;
}
.tray {
    padding-right: 23px;
    display: flex;
    align-items: center;
    font-size: 12.500px;
    color: #222;
}
.tray-chev {
    width: 24px;
    display: flex;
    justify-content: center;
}
.tray-touch {
    width: 24px;
    margin-left: 12px;
    display: flex;
    justify-content: center;
}
.tray-lang {
    width: 40px;
    margin-left: 11px;
    display: flex;
    flex-direction: column;
    align-items: center;
    line-height: 18px;
}
.tray-wifi {
    width: 24px;
    margin-left: 12px;
}
.tray-vol {
    width: 22px;
    margin-left: 3px;
}
.faint {
    stroke: #aaa;
}
.tray-clock {
    width: 80px;
    margin-left: 9px;
    display: flex;
    flex-direction: column;
    align-items: flex-end;
    line-height: 18px;
}
.tray-bell {
    width: 18px;
    margin-left: 8px;
}
```
